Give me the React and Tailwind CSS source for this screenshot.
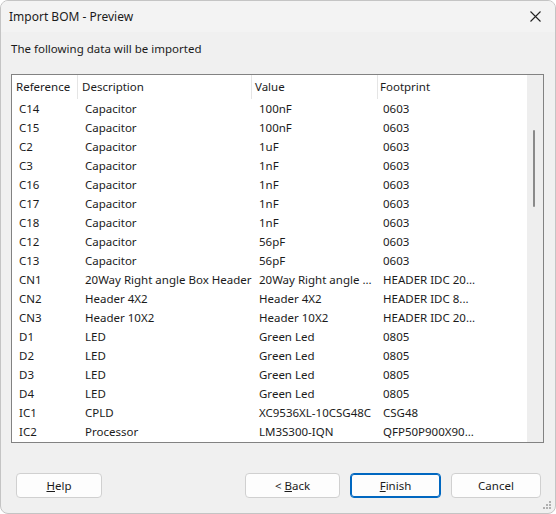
const rows = [
  ["C14", "Capacitor", "100nF", "0603"],
  ["C15", "Capacitor", "100nF", "0603"],
  ["C2", "Capacitor", "1uF", "0603"],
  ["C3", "Capacitor", "1nF", "0603"],
  ["C16", "Capacitor", "1nF", "0603"],
  ["C17", "Capacitor", "1nF", "0603"],
  ["C18", "Capacitor", "1nF", "0603"],
  ["C12", "Capacitor", "56pF", "0603"],
  ["C13", "Capacitor", "56pF", "0603"],
  ["CN1", "20Way Right angle Box Header", "20Way Right angle ...", "HEADER IDC 20..."],
  ["CN2", "Header 4X2", "Header 4X2", "HEADER IDC 8..."],
  ["CN3", "Header 10X2", "Header 10X2", "HEADER IDC 20..."],
  ["D1", "LED", "Green Led", "0805"],
  ["D2", "LED", "Green Led", "0805"],
  ["D3", "LED", "Green Led", "0805"],
  ["D4", "LED", "Green Led", "0805"],
  ["IC1", "CPLD", "XC9536XL-10CSG48C", "CSG48"],
  ["IC2", "Processor", "LM3S300-IQN", "QFP50P900X90..."],
]

const cols = ["w-[66px]", "w-[174px]", "w-[126px]", "w-[149px]"]
const headPad = ["pl-[4px]", "pl-[4px]", "pl-[3px]", "pl-[2px]"]
const cellPad = ["pl-[7px]", "pl-[7px]", "pl-[7px]", "pl-[5px]"]
const headers = ["Reference", "Description", "Value", "Footprint"]

function Button({ children, primary, width }) {
  return (
    <button
      className={
        "h-[25px] rounded-[4px] bg-[#fdfdfd] text-[11.5px] text-[#1b1b1b] " +
        width +
        (primary ? " border border-[#0067c0] shadow-[inset_0_0_0_1px_#0067c0]" : " border border-[#d0d0d0]")
      }
    >
      {children}
    </button>
  )
}

export default function App() {
  return (
    <div
      className="w-[556px] h-[514px] bg-white"
      style={{ fontFamily: '"Noto Sans", "Open Sans", sans-serif' }}
    >
      <div className="w-full h-full flex flex-col rounded-[8px] border border-[#c4c4c4] bg-[#f0f0f0] overflow-hidden relative text-[11.5px] text-[#1b1b1b]">
        {/* title bar */}
        <div className="h-[31px] shrink-0 bg-[#f3f3f3] flex items-center justify-between pl-[8px] pr-[14px]">
          <span className="text-[12px]">Import BOM - Preview</span>
          <svg width="11" height="11" viewBox="0 0 11 11" stroke="#222" strokeWidth="1.1">
            <path d="M0.5 0.5 L10.5 10.5 M10.5 0.5 L0.5 10.5" />
          </svg>
        </div>

        <div className="pl-[10px] pt-[8px] h-[42px] leading-[18px]">The following data will be imported</div>

        {/* list view */}
        <div className="ml-[10px] w-[533px] h-[369px] border border-[#828282] bg-white flex">
          <div className="flex-1 flex flex-col">
            <div className="flex h-[24px] items-center">
              {headers.map((h, i) => (
                <div
                  key={h}
                  className={cols[i] + " " + headPad[i] + " h-full flex items-center " + (i < 3 ? "border-r border-[#e5e5e5]" : "")}
                >
                  {h}
                </div>
              ))}
            </div>
            {rows.map((r) => (
              <div key={r[0]} className="flex h-[19px] items-center">
                {r.map((c, i) => (
                  <div key={i} className={cols[i] + " " + cellPad[i] + " whitespace-nowrap overflow-hidden"}>
                    {c}
                  </div>
                ))}
              </div>
            ))}
          </div>
          <div className="w-[16px] h-full bg-[#eeeeee] relative">
            <div className="absolute left-[6px] top-[55px] w-[2px] h-[77px] bg-[#8a8a8a] rounded-full" />
          </div>
        </div>

        {/* buttons */}
        <div className="flex items-center mt-[30px] pl-[15px] pr-[14px]">
          <Button width="w-[86px]">
            <span className="underline">H</span>elp
          </Button>
          <div className="flex-1" />
          <div className="flex gap-[10px]">
            <Button width="w-[95px]">
              &lt; <span className="underline">B</span>ack
            </Button>
            <Button width="w-[91px]" primary>
              <span className="underline">F</span>inish
            </Button>
            <Button width="w-[90px]">Cancel</Button>
          </div>
        </div>

        {/* resize grip */}
        <svg className="absolute right-[3px] bottom-[3px]" width="9" height="9" viewBox="0 0 9 9" fill="#b0b0b0">
          <rect x="6" y="0" width="2" height="2" />
          <rect x="3" y="3" width="2" height="2" />
          <rect x="6" y="3" width="2" height="2" />
          <rect x="0" y="6" width="2" height="2" />
          <rect x="3" y="6" width="2" height="2" />
          <rect x="6" y="6" width="2" height="2" />
        </svg>
      </div>
    </div>
  )
}
